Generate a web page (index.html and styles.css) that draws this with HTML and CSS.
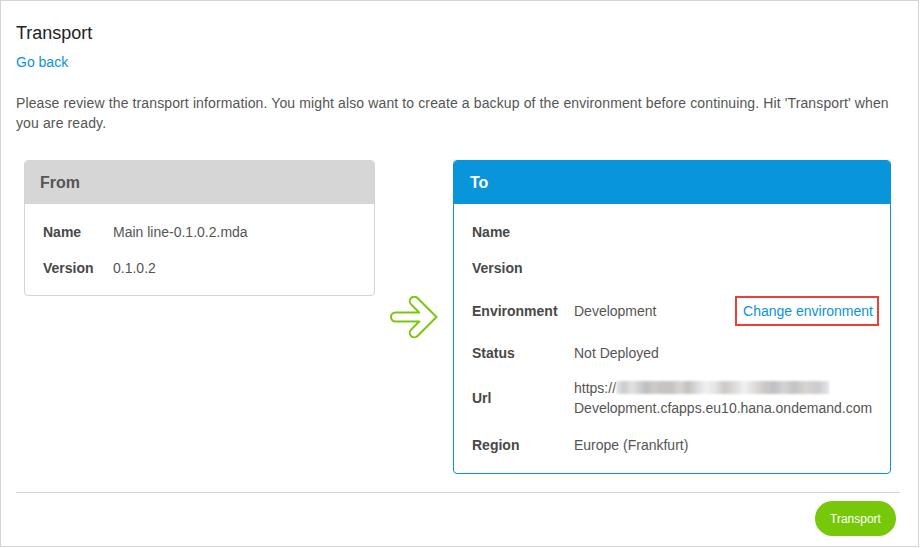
FILE: index.html
```html
<!DOCTYPE html>
<html>
<head>
<meta charset="utf-8">
<link rel="stylesheet" href="styles.css">
</head>
<body>
<div class="frame">
  <h1 class="title">Transport</h1>
  <a class="back" href="#">Go back</a>
  <p class="intro">Please review the transport information. You might also want to create a backup of the environment before continuing. Hit 'Transport' when you are ready.</p>

  <div class="cards">
    <section class="card card-from">
      <header class="card-head">From</header>
      <div class="card-body">
        <div class="row"><span class="label">Name</span><span class="value">Main line-0.1.0.2.mda</span></div>
        <div class="row"><span class="label">Version</span><span class="value">0.1.0.2</span></div>
      </div>
    </section>

    <div class="arrow">
      <svg width="48" height="42" viewBox="0 0 48 42">
        <path d="M5.5 16.5 L29.2 16.5 L21.1 8.4 A4.5 4.5 0 0 1 27.5 2 L46.5 21 L27.5 40 A4.5 4.5 0 0 1 21.1 33.6 L29.2 25.5 L5.5 25.5 A4.5 4.5 0 0 1 5.5 16.5 Z" fill="none" stroke="#7ac70c" stroke-width="2" stroke-linejoin="round"/>
      </svg>
    </div>

    <section class="card card-to">
      <header class="card-head">To</header>
      <div class="card-body">
        <div class="row"><span class="label">Name</span><span class="value"></span></div>
        <div class="row"><span class="label">Version</span><span class="value"></span></div>
        <div class="row row-env"><span class="label">Environment</span><span class="value">Development</span><a class="change" href="#">Change environment</a></div>
        <div class="row"><span class="label">Status</span><span class="value">Not Deployed</span></div>
        <div class="row row-url"><span class="label">Url</span><span class="value">https://<span class="blur"></span><br>Development.cfapps.eu10.hana.ondemand.com</span></div>
        <div class="row row-last"><span class="label">Region</span><span class="value">Europe (Frankfurt)</span></div>
      </div>
    </section>
  </div>

  <div class="footer">
    <button class="btn">Transport</button>
  </div>
</div>
</body>
</html>
```

FILE: styles.css
```css
html, body {
  margin: 0;
  padding: 0;
  background: #fff;
}
body {
  font-family: "Liberation Sans", Arial, sans-serif;
  font-size: 14px;
  color: #555;
}
.frame {
  box-sizing: border-box;
  width: 919px;
  height: 547px;
  border: 1px solid #d4d4d4;
  padding: 21px 18px 0 15px;
}
.title {
  margin: 0;
  font-size: 18px;
  line-height: 22px;
  font-weight: normal;
  color: #222;
}
.back {
  display: block;
  margin-top: 8px;
  line-height: 20px;
  color: #0a93dc;
  text-decoration: none;
  width: max-content;
}
.intro {
  margin: 21px 0 0;
  line-height: 20px;
  color: #555;
  letter-spacing: 0.12px;
}
.cards {
  display: flex;
  align-items: flex-start;
  margin-top: 27px;
  padding-left: 8px;
}
.arrow {
  flex: none;
  align-self: center;
  display: flex;
  margin: 0 15px;
}
.card {
  flex: none;
  box-sizing: border-box;
  border: 1px solid #d4d4d4;
  border-radius: 4px;
  overflow: hidden;
  background: #fff;
}
.card-from {
  width: 351px;
}
.card-to {
  width: 438px;
  border-color: #0a94d8;
}
.card-head {
  height: 43px;
  line-height: 43px;
  padding-left: 15px;
  font-size: 16px;
  font-weight: bold;
  color: #555;
  background: #d6d6d6;
}
.card-to .card-head {
  background: #0895d9;
  color: #fff;
  padding-left: 16px;
}
.card-body {
  padding: 10px 11px 9px 18px;
}
.card-to .card-body {
  padding-bottom: 10px;
}
.row {
  display: flex;
  align-items: center;
  padding: 8px 0;
  line-height: 20px;
}
.label {
  flex: none;
  width: 70px;
  font-weight: bold;
  color: #484848;
}
.card-to .label {
  width: 102px;
}
.value {
  flex: 1;
  color: #555;
}
.row-env {
  padding: 10px 0 9px;
}
.row-url {
  padding: 7px 0 8px;
}
.row-last {
  padding: 9px 0 8px;
}
.change {
  flex: none;
  border: 2px solid #e8403b;
  padding: 3px 4px 3px 6px;
  line-height: 20px;
  color: #0a93dc;
  text-decoration: none;
}
.blur {
  display: inline-block;
  vertical-align: -1px;
  width: 213px;
  height: 13px;
  filter: blur(1px);
  background: linear-gradient(90deg,
    #e6e6e6 0, #c9ccd0 8px, #e2e2e2 16px, #d3d3d3 22px, #bdbfc4 30px, #cfcac6 38px, #c4c4c6 46px, #c8c2bd 56px, #d6d6d6 64px, #c5c0bb 72px, #d9d9d9 80px, #f0f0f0 90px, #e3e3e3 100px, #cbcbcb 108px, #d8d4d1 116px, #f1f1f1 128px, #dedede 138px, #cdc9c6 148px, #bfc0c4 158px, #d4d4d4 168px, #c2c2c6 178px, #d8d4d0 190px, #c9ccd1 202px, #e4e4e4 213px);
}
.footer {
  margin-top: 18px;
  border-top: 1px solid #d6d6d6;
  padding-top: 8px;
  display: flex;
  justify-content: flex-end;
  padding-right: 4px;
}
.btn {
  width: 81px;
  height: 35px;
  border: none;
  border-radius: 18px;
  background: #78c80a;
  color: #fff;
  font-family: "Liberation Sans", Arial, sans-serif;
  font-size: 12px;
  padding: 0;
}
```
